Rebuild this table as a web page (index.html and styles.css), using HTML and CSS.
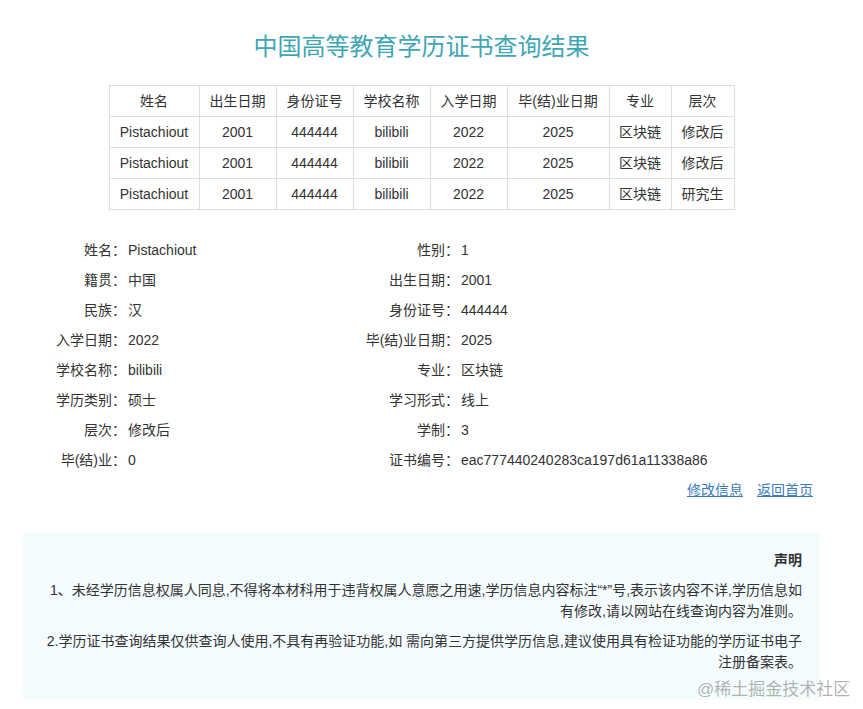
FILE: index.html
```html
<!DOCTYPE html>
<html lang="zh-CN">
<head>
<meta charset="utf-8">
<title>中国高等教育学历证书查询结果</title>
<link rel="stylesheet" href="styles.css">
</head>
<body>
<div class="page">
  <h1 class="title">中国高等教育学历证书查询结果</h1>
  <table class="list">
    <colgroup>
      <col class="c1"><col class="c2"><col class="c3"><col class="c4"><col class="c5"><col class="c6"><col class="c7"><col class="c8">
    </colgroup>
    <tr><th>姓名</th><th>出生日期</th><th>身份证号</th><th>学校名称</th><th>入学日期</th><th>毕(结)业日期</th><th>专业</th><th>层次</th></tr>
    <tr><td>Pistachiout</td><td>2001</td><td>444444</td><td>bilibili</td><td>2022</td><td>2025</td><td>区块链</td><td>修改后</td></tr>
    <tr><td>Pistachiout</td><td>2001</td><td>444444</td><td>bilibili</td><td>2022</td><td>2025</td><td>区块链</td><td>修改后</td></tr>
    <tr><td>Pistachiout</td><td>2001</td><td>444444</td><td>bilibili</td><td>2022</td><td>2025</td><td>区块链</td><td>研究生</td></tr>
  </table>

  <div class="details">
    <div class="label">姓名：</div><div class="value">Pistachiout</div>
    <div class="label">性别：</div><div class="value">1</div>
    <div class="label">籍贯：</div><div class="value">中国</div>
    <div class="label">出生日期：</div><div class="value">2001</div>
    <div class="label">民族：</div><div class="value">汉</div>
    <div class="label">身份证号：</div><div class="value">444444</div>
    <div class="label">入学日期：</div><div class="value">2022</div>
    <div class="label">毕(结)业日期：</div><div class="value">2025</div>
    <div class="label">学校名称：</div><div class="value">bilibili</div>
    <div class="label">专业：</div><div class="value">区块链</div>
    <div class="label">学历类别：</div><div class="value">硕士</div>
    <div class="label">学习形式：</div><div class="value">线上</div>
    <div class="label">层次：</div><div class="value">修改后</div>
    <div class="label">学制：</div><div class="value">3</div>
    <div class="label">毕(结)业：</div><div class="value">0</div>
    <div class="label">证书编号：</div><div class="value">eac777440240283ca197d61a11338a86</div>
  </div>

  <div class="links">
    <a href="#">修改信息</a>
    <a href="#">返回首页</a>
  </div>

  <div class="notice">
    <p class="notice-title">声明</p>
    <p>1、未经学历信息权属人同息,不得将本材科用于违背权属人意愿之用速,学历信息内容标注“*”号,表示该内容不详,学历信息如<br>有修改,请以网站在线查询内容为准则。</p>
    <p>2.学历证书查询结果仅供查询人使用,不具有再验证功能,如 需向第三方提供学历信息,建议使用具有检证功能的学历证书电子<br>注册备案表。</p>
  </div>
</div>
<div class="watermark">@稀土掘金技术社区</div>
</body>
</html>
```

FILE: styles.css
```css
html, body {
  margin: 0;
  padding: 0;
  background: #ffffff;
}

body {
  font-family: "Liberation Sans", "Noto Sans CJK SC", sans-serif;
  font-size: 14px;
  color: #333333;
  position: relative;
  min-height: 709px;
}

.page {
  width: 797px;
  margin-left: 23px;
  padding-top: 27px;
}

.title {
  margin: 0;
  text-align: center;
  font-size: 24px;
  line-height: 36px;
  font-weight: normal;
  color: #3fa6b5;
  font-family: "Noto Sans CJK SC", sans-serif;
}

.list {
  margin: 22px auto 0;
  width: 625px;
  border-collapse: collapse;
  table-layout: fixed;
}

.list .c1 { width: 90px; }
.list .c2 { width: 77px; }
.list .c3 { width: 77px; }
.list .c4 { width: 77px; }
.list .c5 { width: 77px; }
.list .c6 { width: 102px; }
.list .c7 { width: 62px; }
.list .c8 { width: 63px; }

.list th,
.list td {
  border: 1px solid #dddddd;
  padding: 5px 0;
  line-height: 20px;
  font-size: 14px;
  font-weight: normal;
  text-align: center;
  color: #333333;
  white-space: nowrap;
}

.details {
  margin-top: 25px;
  display: grid;
  grid-template-columns: 103px 230px 103px 1fr;
  line-height: 30px;
}

.details .label {
  text-align: right;
  white-space: nowrap;
}

.details .value {
  padding-left: 2px;
  white-space: nowrap;
}

.links {
  display: flex;
  justify-content: flex-end;
  gap: 14px;
  padding-right: 7px;
  line-height: 30px;
}

.links a {
  color: #3b7bbd;
  text-decoration: underline;
}

.notice {
  margin-top: 27px;
  background: #f4fcfe;
  padding: 18px 18px 28px 18px;
  text-align: right;
  line-height: 21px;
  height: 168px;
  box-sizing: border-box;
}

.notice p {
  margin: 0 0 9px 0;
}

.notice .notice-title {
  font-weight: bold;
}

.watermark {
  position: absolute;
  left: 697px;
  top: 678px;
  font-size: 17px;
  line-height: 24px;
  color: rgba(165, 165, 165, 0.85);
  white-space: nowrap;
}
```
